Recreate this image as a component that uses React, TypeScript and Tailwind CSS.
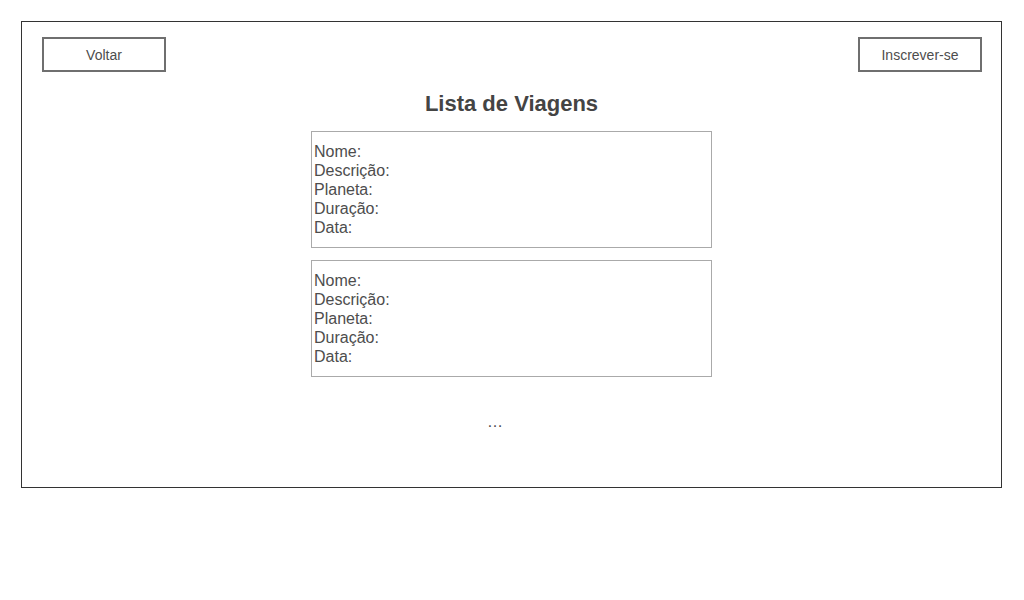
export default function App() {
  const fields = ["Nome:", "Descrição:", "Planeta:", "Duração:", "Data:"];
  return (
    <div className="w-[1024px] h-[600px] bg-white pt-[21px] pl-[21px]" style={{ fontFamily: '"Liberation Sans", Arial, sans-serif' }}>
      <div className="w-[981px] h-[467px] border border-[#333333] pt-[15px] flex flex-col">
        <div className="flex justify-between pl-[20px] pr-[19px]">
          <button className="w-[124px] h-[35px] border-2 border-[#6f6f6f] pt-[2px] text-[14px] text-[#4d4d4d] flex items-center justify-center bg-white">
            Voltar
          </button>
          <button className="w-[124px] h-[35px] border-2 border-[#6f6f6f] pt-[2px] text-[14px] text-[#4d4d4d] flex items-center justify-center bg-white">
            Inscrever-se
          </button>
        </div>
        <h1 className="mt-[19px] text-center text-[22px] leading-[26px] font-bold text-[#444444]">Lista de Viagens</h1>
        <div className="mt-[14px] flex flex-col items-center gap-[12px]">
          {[0, 1].map((i) => (
            <div key={i} className="w-[401px] h-[117px] border border-[#aaaaaa] pl-[2px] flex flex-col justify-center text-[16px] leading-[19px] text-[#4d4d4d]">
              {fields.map((f) => (
                <div key={f}>{f}</div>
              ))}
            </div>
          ))}
        </div>
        <div className="mt-[35px] w-[401px] mx-auto pl-[176px] text-[16px] leading-[19px] text-[#4d4d4d]">…</div>
      </div>
    </div>
  );
}
